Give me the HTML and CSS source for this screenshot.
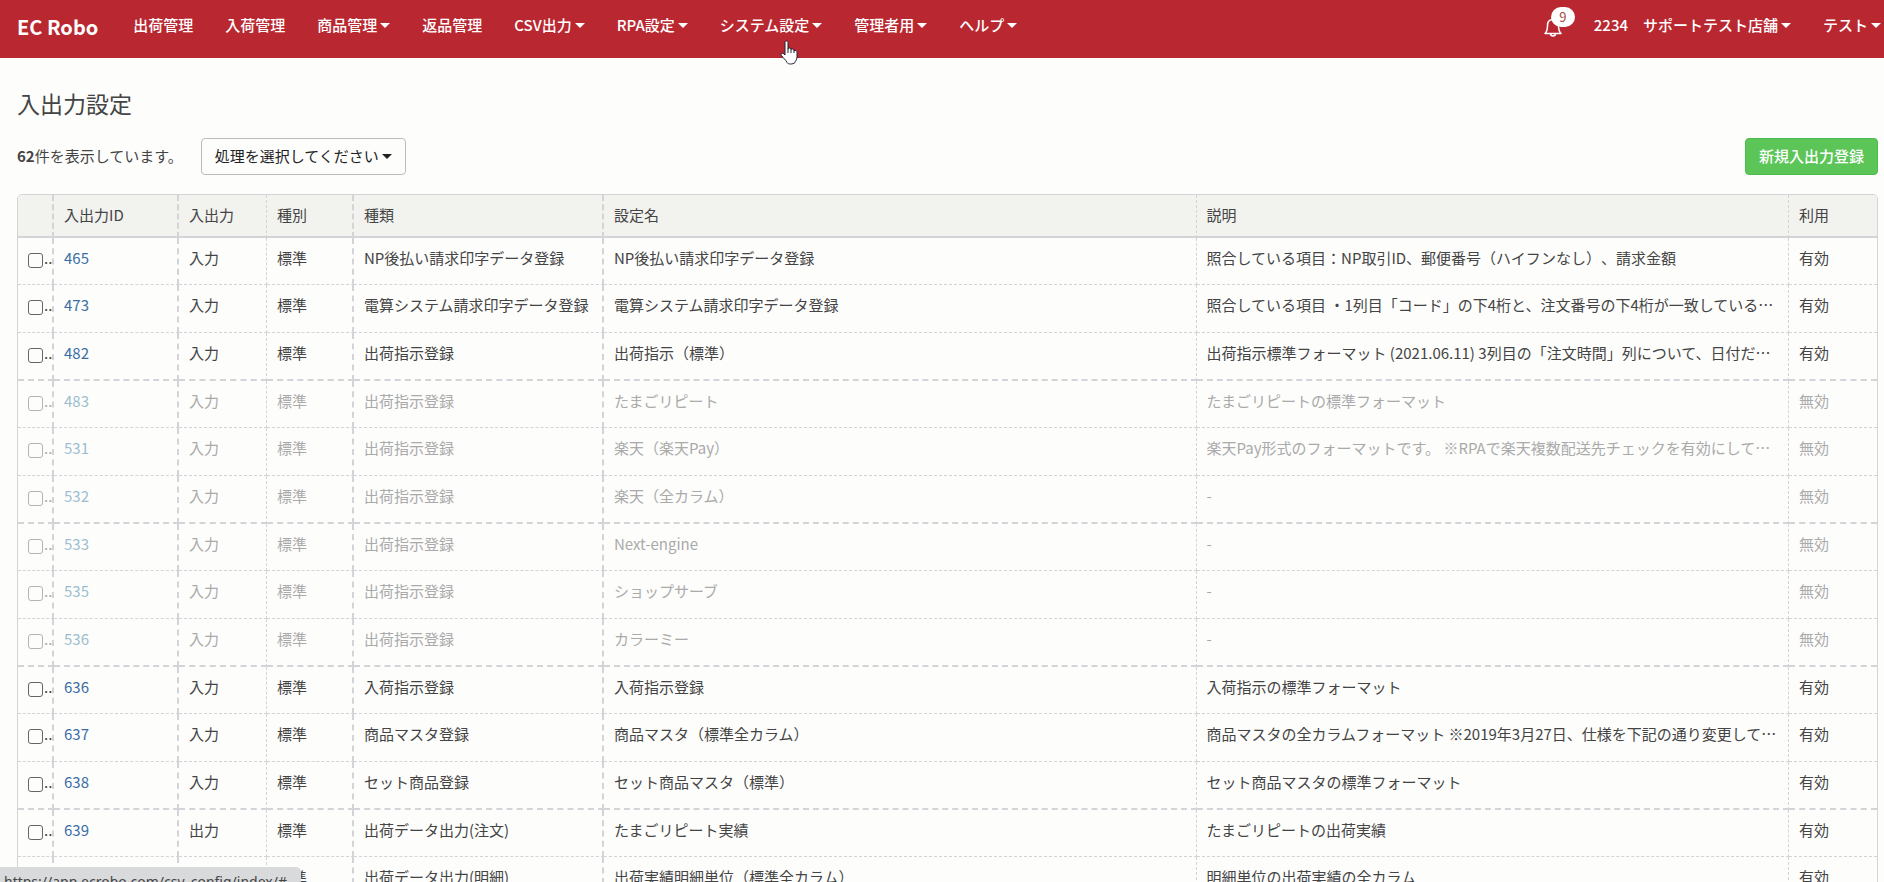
FILE: index.html
```html
<!DOCTYPE html>
<html lang="ja">
<head>
<meta charset="utf-8">
<title>入出力設定 | EC Robo</title>
<link rel="stylesheet" href="styles.css">
</head>
<body>
<header class="navbar">
  <a class="brand" href="#">EC Robo</a>
  <nav class="menu">
    <a href="#">出荷管理</a>
    <a href="#">入荷管理</a>
    <a class="has-caret" href="#">商品管理</a>
    <a href="#">返品管理</a>
    <a class="has-caret" href="#">CSV出力</a>
    <a class="has-caret" href="#">RPA設定</a>
    <a class="has-caret hovered" href="#">システム設定<svg class="pointer" viewBox="0 0 18 25" width="18" height="25" aria-hidden="true"><path d="M5 2.500C5 .5 8 .5 8 2.500V8.500C9 7.500 11 8 11 9.300C12 8.500 14 9 14 10.500C15.500 10 17 11 17 12.500V17C17 20 15 21 15 22.500C13 24.500 8 24.500 7 22.500C6 20 3 18 1.500 15.500C0 13 2.500 12 5 15Z" fill="#fff" stroke="#223" stroke-width="1"/><path d="M8 8V13M11 9V13M14 10V13" fill="none" stroke="#223" stroke-width="1"/></svg></a>
    <a class="has-caret" href="#">管理者用</a>
    <a class="has-caret" href="#">ヘルプ</a>
  </nav>
  <div class="account">
    <button class="bell" type="button" aria-label="お知らせ">
      <svg viewBox="0 0 18 20" width="18" height="20" aria-hidden="true"><path d="M1 16.500C3 14.500 3.500 12 3.500 8.500C3.500 5 5.500 2.500 9 2.500S14.500 5 14.500 8.500C14.500 12 15 14.500 17 16.500ZM6.500 16.500C6.500 19.800 11.500 19.800 11.500 16.500M9 2.500V1" fill="none" stroke="#fff" stroke-width="1.500" stroke-linejoin="round"/></svg>
      <span class="badge">9</span>
    </button>
    <a class="has-caret" href="#">2234　サポートテスト店舗</a>
    <a class="has-caret" href="#">テスト</a>
  </div>
</header>
<main class="page">
  <h1>入出力設定</h1>
  <div class="toolbar">
    <p class="count"><b>62</b>件を表示しています。</p>
    <button class="btn has-caret" type="button">処理を選択してください</button>
    <button class="btn btn-primary" type="button">新規入出力登録</button>
  </div>
  <table class="grid">
    <colgroup><col class="c-check"><col class="c-id"><col class="c-io"><col class="c-class"><col class="c-kind"><col class="c-name"><col class="c-desc"><col class="c-use"></colgroup>
    <thead>
      <tr><th></th><th>入出力ID</th><th>入出力</th><th>種別</th><th>種類</th><th>設定名</th><th>説明</th><th>利用</th></tr>
    </thead>
    <tbody>
      <tr><td><input type="checkbox" aria-label="465">..</td><td><a href="#">465</a></td><td>入力</td><td>標準</td><td>NP後払い請求印字データ登録</td><td>NP後払い請求印字データ登録</td><td>照合している項目：NP取引ID、郵便番号（ハイフンなし）、請求金額</td><td>有効</td></tr>
      <tr><td><input type="checkbox" aria-label="473">..</td><td><a href="#">473</a></td><td>入力</td><td>標準</td><td>電算システム請求印字データ登録</td><td>電算システム請求印字データ登録</td><td>照合している項目 ・1列目「コード」の下4桁と、注文番号の下4桁が一致している…</td><td>有効</td></tr>
      <tr><td><input type="checkbox" aria-label="482">..</td><td><a href="#">482</a></td><td>入力</td><td>標準</td><td>出荷指示登録</td><td>出荷指示（標準）</td><td>出荷指示標準フォーマット (2021.06.11) 3列目の「注文時間」列について、日付だ…</td><td>有効</td></tr>
      <tr class="off"><td><input type="checkbox" aria-label="483">..</td><td><a href="#">483</a></td><td>入力</td><td>標準</td><td>出荷指示登録</td><td>たまごリピート</td><td>たまごリピートの標準フォーマット</td><td>無効</td></tr>
      <tr class="off"><td><input type="checkbox" aria-label="531">..</td><td><a href="#">531</a></td><td>入力</td><td>標準</td><td>出荷指示登録</td><td>楽天（楽天Pay）</td><td>楽天Pay形式のフォーマットです。 ※RPAで楽天複数配送先チェックを有効にして…</td><td>無効</td></tr>
      <tr class="off"><td><input type="checkbox" aria-label="532">..</td><td><a href="#">532</a></td><td>入力</td><td>標準</td><td>出荷指示登録</td><td>楽天（全カラム）</td><td>-</td><td>無効</td></tr>
      <tr class="off"><td><input type="checkbox" aria-label="533">..</td><td><a href="#">533</a></td><td>入力</td><td>標準</td><td>出荷指示登録</td><td>Next-engine</td><td>-</td><td>無効</td></tr>
      <tr class="off"><td><input type="checkbox" aria-label="535">..</td><td><a href="#">535</a></td><td>入力</td><td>標準</td><td>出荷指示登録</td><td>ショップサーブ</td><td>-</td><td>無効</td></tr>
      <tr class="off"><td><input type="checkbox" aria-label="536">..</td><td><a href="#">536</a></td><td>入力</td><td>標準</td><td>出荷指示登録</td><td>カラーミー</td><td>-</td><td>無効</td></tr>
      <tr><td><input type="checkbox" aria-label="636">..</td><td><a href="#">636</a></td><td>入力</td><td>標準</td><td>入荷指示登録</td><td>入荷指示登録</td><td>入荷指示の標準フォーマット</td><td>有効</td></tr>
      <tr><td><input type="checkbox" aria-label="637">..</td><td><a href="#">637</a></td><td>入力</td><td>標準</td><td>商品マスタ登録</td><td>商品マスタ（標準全カラム）</td><td>商品マスタの全カラムフォーマット ※2019年3月27日、仕様を下記の通り変更して…</td><td>有効</td></tr>
      <tr><td><input type="checkbox" aria-label="638">..</td><td><a href="#">638</a></td><td>入力</td><td>標準</td><td>セット商品登録</td><td>セット商品マスタ（標準）</td><td>セット商品マスタの標準フォーマット</td><td>有効</td></tr>
      <tr><td><input type="checkbox" aria-label="639">..</td><td><a href="#">639</a></td><td>出力</td><td>標準</td><td>出荷データ出力(注文)</td><td>たまごリピート実績</td><td>たまごリピートの出荷実績</td><td>有効</td></tr>
      <tr><td></td><td></td><td></td><td>標準</td><td>出荷データ出力(明細)</td><td>出荷実績明細単位（標準全カラム）</td><td>明細単位の出荷実績の全カラム</td><td>有効</td></tr>
    </tbody>
  </table>
</main>
<div class="status">https://app.ecrobo.com/csv_config/index/#</div>
</body>
</html>
```
FILE: styles.css
```css
* { box-sizing: border-box; }

body {
  margin: 0;
  height: 100vh;
  overflow: hidden;
  background: #fdfdfc;
  color: #444;
  font: 15px/24px "Noto Sans CJK JP", sans-serif;
  text-spacing-trim: space-all;
}

a { color: #3a6ea5; text-decoration: none; }
button { font: inherit; cursor: pointer; }

.has-caret::after {
  content: "";
  display: inline-block;
  margin-left: 3px;
  vertical-align: 3px;
  border: 5px solid transparent;
  border-top-color: currentColor;
  border-bottom: 0;
}

/* Top bar */
.navbar {
  display: flex;
  align-items: center;
  height: 58px;
  padding: 0 3px 8px 17px;
  background: #b92831;
  font-weight: 500;
  white-space: nowrap;
}
.navbar a { color: #fff; }
.brand { padding-top: 3px; font-size: 20px; font-weight: 700; }
.menu { display: flex; gap: 32px; margin-left: 35px; }
.hovered { position: relative; }
.pointer { position: absolute; left: 60px; top: 27px; }
.account { display: flex; align-items: center; gap: 32px; margin-left: auto; }

.bell {
  position: relative;
  display: flex;
  padding: 4px 0 0;
  border: 0;
  background: none;
}
.badge {
  position: absolute;
  left: 7px;
  top: -6px;
  width: 24px;
  border-radius: 10px;
  background: #fff;
  color: #a8483c;
  font-size: 13px;
  font-weight: 400;
  line-height: 20px;
  text-align: center;
}

/* Content */
.page { padding: 29px 6px 0 17px; }
h1 { margin: 0 0 19px; font-size: 23px; font-weight: 400; line-height: 32px; }
.toolbar { display: flex; align-items: center; margin-bottom: 19px; }
.count { margin: 0 18px 2px 0; }

.btn {
  height: 37px;
  padding: 0 13px 2px;
  border: 1px solid #bbb;
  border-radius: 4px;
  background: #fdfdfc;
  color: #222;
}
.btn-primary {
  margin-left: auto;
  border-color: #4fbb4c;
  background: #5bc558;
  color: #fff;
  font-weight: 500;
}

.grid {
  width: 100%;
  table-layout: fixed;
  border: 1px solid #d4d4d4;
  border-radius: 5px 5px 0 0;
  border-spacing: 0;
}
.c-check { width: 36px; }
.c-id { width: 125px; }
.c-io, .c-use { width: 88px; }
.c-class { width: 87px; }
.c-kind { width: 250px; }

th, td {
  overflow: hidden;
  padding: 8px 0 0 10px;
  border: 0 dashed #d4d4d8;
  border-width: 0 2px 1px 0;
  font-weight: 400;
  text-align: left;
  vertical-align: top;
  white-space: nowrap;
}
th:nth-child(3), td:nth-child(3),
th:nth-child(6), td:nth-child(6),
th:nth-child(7), td:nth-child(7) { border-right-width: 1px; }
th:last-child, td:last-child { border-right-width: 0; }
th { height: 43px; background: #f2f2ef; border-bottom: 2px solid #d4d4d8; }
th:first-child { border-top-left-radius: 4px; }
th:last-child { border-top-right-radius: 4px; }

td { height: 48px; }
tr:nth-child(3n+1) td { height: 47px; }
tr:nth-child(3n) td { border-bottom-width: 2px; }

input[type="checkbox"] {
  appearance: none;
  width: 15px;
  height: 15px;
  margin: 0 1px 0 0;
  border: 1px solid #666;
  border-radius: 3px;
  vertical-align: -4px;
}

.off { color: #aaa; }
.off a { color: #9cbdcf; }
.off input[type="checkbox"] { border-color: #b4b4b4; }

/* Link preview of the browser */
.status {
  position: fixed;
  left: 0;
  bottom: -13px;
  width: 301px;
  padding: 3px 4px 1px;
  border-radius: 0 5px 0 0;
  background: #d9dadb;
  font: 14px/24px "Noto Sans", sans-serif;
}
```
